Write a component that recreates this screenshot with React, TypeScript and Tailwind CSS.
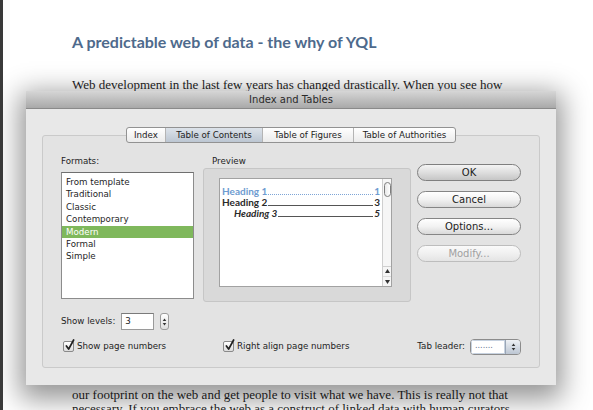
import React from 'react';

const ui = "font-['DejaVu_Sans',sans-serif]";

const FORMATS = ['From template', 'Traditional', 'Classic', 'Contemporary', 'Modern', 'Formal', 'Simple'];

const TABS = [
  { label: 'Index', w: 'w-[38px]' },
  { label: 'Table of Contents', w: 'w-[97px]', active: true },
  { label: 'Table of Figures', w: 'w-[91px]' },
  { label: 'Table of Authorities', w: 'w-[102px]' },
];

function Arrows({ size = 3 }: { size?: number }) {
  // tiny up/down triangles used by steppers and popups
  return (
    <svg width={size * 2 + 1} height={size * 3 + 2} viewBox="0 0 7 11">
      <path d="M3.5 0.5 L6 4 L1 4 Z" fill="#333" />
      <path d="M3.5 10.5 L6 7 L1 7 Z" fill="#333" />
    </svg>
  );
}

function Check() {
  return (
    <span className="relative inline-block h-[11px] w-[11px] shrink-0 rounded-[2px] border border-[#8a8a8a] bg-linear-to-b from-white to-[#dcdcdc]">
      <svg className="absolute -top-[3px] left-[1px] overflow-visible" width="10" height="12" viewBox="0 0 11 13">
        <path d="M1.5 7.5 L4 11 L9.5 1" fill="none" stroke="#1f1f1f" strokeWidth="1.9" strokeLinecap="round" strokeLinejoin="round" />
      </svg>
    </span>
  );
}

function Button({ label, kind }: { label: string; kind?: 'default' | 'disabled' }) {
  const tone =
    kind === 'default'
      ? 'border-[#7f7f7f] from-[#f4f4f4] via-[#dedede] to-[#c6c6c6] text-[#1c1c1c]'
      : kind === 'disabled'
        ? 'border-[#bdbdbd] from-[#fafafa] via-[#f0f0f0] to-[#e4e4e4] text-[#a0a0a0]'
        : 'border-[#858585] from-white via-[#f2f2f2] to-[#d9d9d9] text-[#1c1c1c]';
  return (
    <div className={`h-[17px] rounded-full border bg-linear-to-b text-center text-[10px] leading-[15px] ${tone}`}>
      {label}
    </div>
  );
}

function TocLine({ title, page, className, leader }: { title: string; page: string; className: string; leader: string }) {
  return (
    <div className={`flex items-end leading-[11px] ${className}`}>
      <span>{title}</span>
      <span className={`mx-[1px] mb-[2px] flex-1 border-b ${leader}`} />
      <span>{page}</span>
    </div>
  );
}

export default function App() {
  return (
    <div className="relative h-[410px] w-[593px] overflow-hidden border-l-[3px] border-[#3a3a3a] bg-white">
      {/* Document behind the sheet */}
      <div className="pl-[69px] pt-[32px]">
        <h1 className="font-['Lato',sans-serif] text-[16px] font-bold leading-[20px] text-[#4e6a8c]">
          A predictable web of data - the why of YQL
        </h1>
        <p className="mt-[26px] font-['Liberation_Serif',serif] text-[13px] leading-[13px] text-[#1e1e1e]">
          Web development in the last few years has changed drastically. When you see how
        </p>
        <p className="mt-[297px] font-['Liberation_Serif',serif] text-[13px] leading-[14px] text-[#1e1e1e]">
          our footprint on the web and get people to visit what we have. This is really not that
          <br />
          necessary. If you embrace the web as a construct of linked data with human curators
        </p>
      </div>

      {/* Index and Tables sheet */}
      <div className={`absolute left-[23px] top-[91px] w-[530px] bg-[#e8e8e8] shadow-[0_8px_26px_6px_rgba(0,0,0,0.42)] ${ui}`}>
        <div className="h-[18px] border-b border-[#8a8a8a] bg-linear-to-b from-[#d6d6d6] to-[#a9a9a9] text-center text-[10px] leading-[17px] text-[#2a2a2a]">
          Index and Tables
        </div>

        <div className="px-[16px] pb-[17px] pt-[18px]">
          {/* Tabs */}
          <div className="relative z-10 flex h-[16px] justify-center">
            <div className="flex overflow-hidden rounded-[3px] border border-[#929292] bg-linear-to-b from-white to-[#ebebeb] text-[8.7px] leading-[14px] text-[#222]">
              {TABS.map((t, i) => (
                <div
                  key={t.label}
                  className={`${t.w} text-center ${i > 0 ? 'border-l border-[#b4b4b4]' : ''} ${t.active ? 'bg-linear-to-b from-[#dde3ea] to-[#bcc6d2]' : ''}`}
                >
                  {t.label}
                </div>
              ))}
            </div>
          </div>

          {/* Group box */}
          <div className="-mt-[8px] rounded-[3px] border border-[#cacaca] bg-[#e3e3e3] px-[18px] pb-[12px] pt-[19px] text-[8.7px] text-[#1e1e1e]">
            <div className="flex items-start">
              {/* Formats */}
              <div className="w-[133px]">
                <div className="h-[12px] leading-[12px]">Formats:</div>
                <div className="mt-[5px] h-[127px] border border-[#8c8c8c] border-t-[#6f6f6f] bg-white pt-[3px]">
                  {FORMATS.map(f => (
                    <div
                      key={f}
                      className={`h-[12.4px] pl-[4px] leading-[12.4px] ${f === 'Modern' ? 'bg-[#7fb85c] text-white' : ''}`}
                    >
                      {f}
                    </div>
                  ))}
                </div>
              </div>

              {/* Preview */}
              <div className="ml-[9px] w-[208px]">
                <div className="h-[12px] pl-[9px] leading-[12px]">Preview</div>
                <div className="mt-[1px] h-[134px] rounded-[3px] border border-[#c6c6c6] bg-[#d9d9d9] pl-[15px] pr-[18px] pt-[9px]">
                  <div className="flex h-[109px] border border-[#a2a2a2] bg-white">
                    <div className="flex-1 px-[2px] pt-[7px] font-['Lato',sans-serif] text-[10px] font-bold">
                      <TocLine title="Heading 1" page="1" className="text-[#6e9bd0]" leader="border-dotted border-[#7ea5d6]" />
                      <TocLine title="Heading 2" page="3" className="text-[#2a2a2a]" leader="border-solid border-[#555]" />
                      <TocLine title="Heading 3" page="5" className="pl-[12px] italic text-[#2a2a2a]" leader="border-solid border-[#555]" />
                    </div>
                    <div className="flex w-[9px] flex-col items-center border-l border-[#cfcfcf] bg-[#f6f6f6]">
                      <div className="mt-[3px] h-[15px] w-[7px] rounded-full border border-[#7d7d7d] bg-linear-to-r from-[#e8e8e8] to-white" />
                      <div className="mt-auto flex w-full flex-col items-center border-t border-[#cfcfcf] pb-[2px] pt-[2px]">
                        <svg width="5" height="4" viewBox="0 0 5 4"><path d="M2.5 0 L5 4 L0 4 Z" fill="#333" /></svg>
                        <div className="my-[3px] w-full border-t border-[#dcdcdc]" />
                        <svg width="5" height="4" viewBox="0 0 5 4"><path d="M2.5 4 L5 0 L0 0 Z" fill="#333" /></svg>
                      </div>
                    </div>
                  </div>
                </div>
              </div>

              {/* Buttons */}
              <div className="ml-[6px] flex w-[104px] flex-col gap-[10px] pt-[9px]">
                <Button label="OK" kind="default" />
                <Button label="Cancel" />
                <Button label="Options..." />
                <Button label="Modify..." kind="disabled" />
              </div>
            </div>

            {/* Show levels */}
            <div className="mt-[11px] flex h-[17px] items-center">
              <span>Show levels:</span>
              <div className="ml-[6px] h-[17px] w-[33px] border border-[#9a9a9a] border-t-[#7a7a7a] bg-white pl-[3px] leading-[15px]">3</div>
              <div className="ml-[6px] flex h-[17px] w-[9px] items-center justify-center rounded-[3px] border border-[#9c9c9c] bg-linear-to-b from-white to-[#dedede]">
                <Arrows size={2} />
              </div>
            </div>

            {/* Options row */}
            <div className="mt-[9px] flex h-[16px] items-center">
              <div className="ml-[2px] flex w-[160px] items-center">
                <Check />
                <span className="ml-[3px]">Show page numbers</span>
              </div>
              <div className="flex items-center">
                <Check />
                <span className="ml-[3px]">Right align page numbers</span>
              </div>
              <div className="ml-auto flex items-center">
                <span>Tab leader:</span>
                <div className="ml-[5px] flex h-[16px] w-[51px] overflow-hidden rounded-[4px] border border-[#8c8c8c]">
                  <div className="flex-1 border border-[#c7d2e0] bg-white pl-[3px] text-[8px] leading-[10px] text-[#5f7290]">.......</div>
                  <div className="flex w-[15px] items-center justify-center border-l border-[#9aa6b6] bg-linear-to-b from-[#eef1f5] to-[#bcc6d3]">
                    <Arrows size={2} />
                  </div>
                </div>
              </div>
            </div>
          </div>
        </div>
      </div>
    </div>
  );
}
